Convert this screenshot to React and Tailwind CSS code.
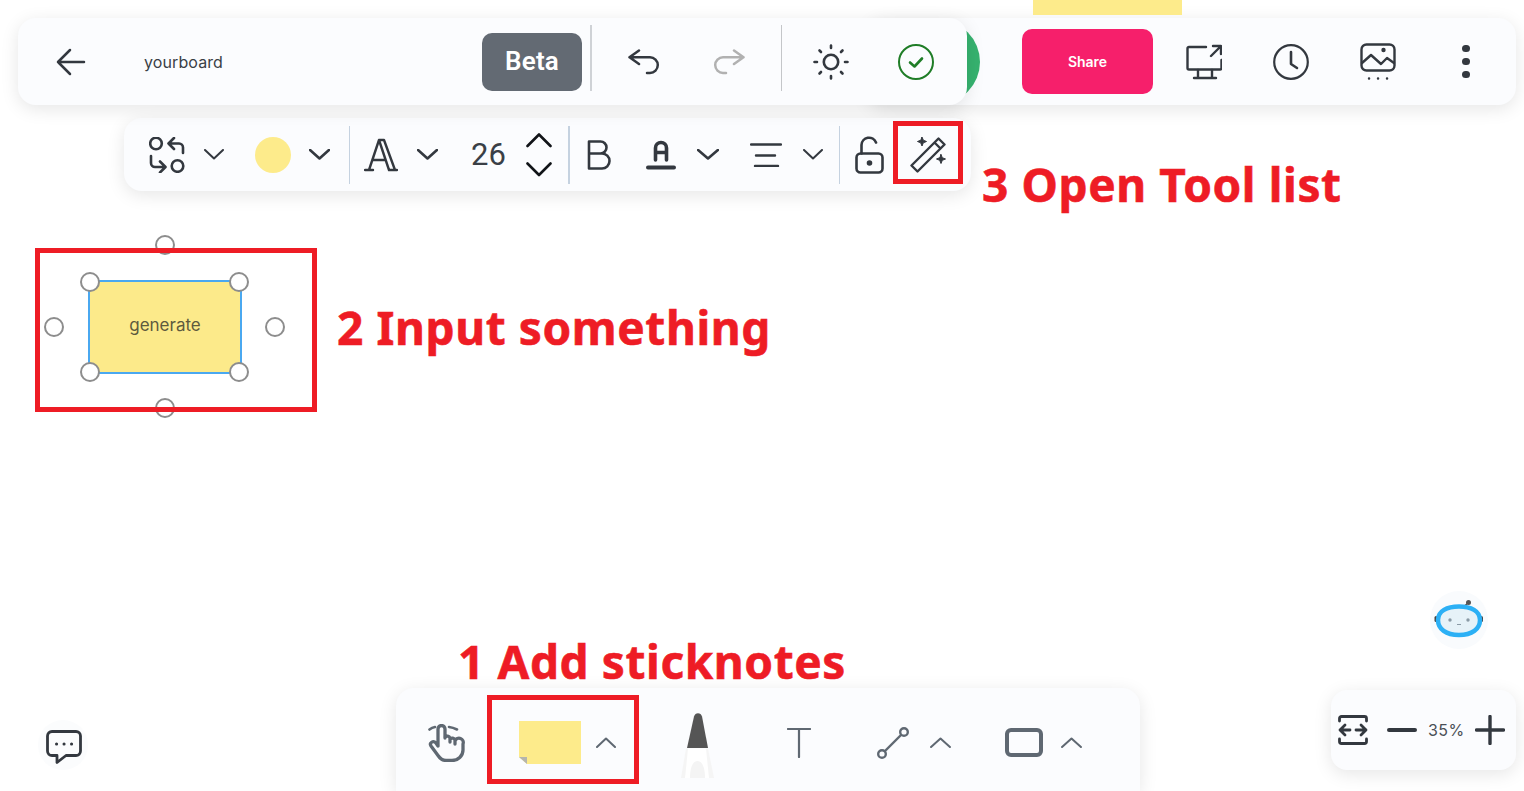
import React from 'react';

const panel = 'bg-[#fbfcfe] shadow-[0_4px_18px_rgba(0,0,0,0.1)]';
const line = { fill: 'none', stroke: 'currentColor', strokeLinecap: 'round', strokeLinejoin: 'round' };

function Chevron({ up, className, width = 20, weight = 2 }) {
  return <svg viewBox="0 0 20 11" className={className} style={{ width }} {...line} strokeWidth={weight} preserveAspectRatio="none">
    <path d={up ? 'M1 10L10 1.5L19 10' : 'M1 1L10 9.5L19 1'} vectorEffect="non-scaling-stroke" />
  </svg>;
}

function Divider({ className }) {
  return <div className={className} />;
}

function Handle({ className }) {
  return <div className={`absolute w-[20px] h-[20px] rounded-full bg-white border-2 border-[#8d8d8d] ${className}`} />;
}

function Note({ className, children }) {
  return <div className={`absolute text-[#ee1c25] font-bold whitespace-nowrap text-[46px] leading-none tracking-[0.6px] [-webkit-text-stroke:0.6px_#ee1c25] font-['Noto_Sans',sans-serif] ${className}`}>{children}</div>;
}

function TopBar() {
  return <div className="flex pt-[18px] pl-[18px] pr-[8px] text-[#33383f]">
    <div className={`relative z-10 flex items-center w-[949px] h-[87px] rounded-[18px] ${panel}`}>
      <svg viewBox="0 0 30 28" className="ml-[38px] w-[30px] h-[28px]" {...line} strokeWidth="2.5">
        <path d="M14 2L2 14L14 26M2 14H28" />
      </svg>
      <span className="ml-[58px] w-[338px] text-[16px] tracking-[0.1px] text-[#3a3f46]">yourboard</span>
      <div className="flex items-center justify-center w-[100px] h-[58px] rounded-[10px] bg-[#636a73] text-white text-[26px] font-semibold tracking-[0.2px] font-['Roboto',sans-serif]">Beta</div>
      <Divider className="ml-[8px] mb-[7px] w-[2px] h-[66px] bg-[#cfd2d6]" />
      <svg viewBox="0 0 32 26" className="ml-[36px] w-[32px] h-[26px]" {...line} strokeWidth="2.5">
        <path d="M11 1.500L1.500 8.300L11 15M1.500 8.300H22a7.800 7.800 0 0 1 0 15.600H19" />
      </svg>
      <svg viewBox="0 0 32 26" className="ml-[53px] w-[32px] h-[26px] text-[#b1b1b1]" {...line} strokeWidth="2.5">
        <path d="M21 1.500L30.500 8.300L21 15M30.500 8.300H10a7.800 7.800 0 0 0 0 15.600H13" />
      </svg>
      <Divider className="ml-[36px] mb-[7px] w-[1px] h-[66px] bg-[#c4c6c9]" />
      <svg viewBox="0 0 38 38" className="ml-[30px] w-[38px] h-[38px]" {...line} strokeWidth="2.6">
        <circle cx="19" cy="19" r="7.200" />
        <path d="M19 2.500V5M19 33V35.500M2.500 19H5M33 19H35.500M7.500 7.500L9 9M29 29L30.500 30.500M30.500 7.500L29 9M9 29L7.500 30.500" />
      </svg>
      <svg viewBox="0 0 38 38" className="ml-[47px] w-[38px] h-[38px] text-[#1f7d27]" {...line} strokeWidth="2">
        <circle cx="19" cy="19" r="17" />
        <path d="M13 19.500L17.500 23.500L25 15.500" strokeWidth="2.600" />
      </svg>
    </div>
    <div className={`flex flex-1 items-center -ml-[100px] h-[87px] rounded-[18px] ${panel}`}>
      <div className="ml-[29px] w-[84px] h-[84px] rounded-full bg-[#36b26f]" />
      <div className="flex items-center justify-center ml-[42px] w-[131px] h-[65px] rounded-[10px] bg-[#f61f6b] text-white text-[14px] font-semibold font-['Inter',sans-serif]">Share</div>
      <svg viewBox="0 0 36 36" className="ml-[33px] w-[36px] h-[36px]" {...line} strokeWidth="2.4">
        <path d="M20 3H3a1.500 1.500 0 0 0-1.500 1.500V24a1.500 1.500 0 0 0 1.500 1.500H34a1.500 1.500 0 0 0 1.500-1.500V16" />
        <path d="M12 26V33M26 26V33M8 34H30M25 12L35 2M27 2H35V10" />
      </svg>
      <svg viewBox="0 0 36 36" className="ml-[51px] w-[36px] h-[36px]" {...line} strokeWidth="2.2">
        <circle cx="18" cy="18" r="16.800" />
        <path d="M18 8V20L24 24" strokeWidth="2.600" />
      </svg>
      <svg viewBox="0 0 36 38" className="ml-[51px] w-[36px] h-[38px]" {...line} strokeWidth="2.4">
        <rect x="1.500" y="1.500" width="33" height="26" rx="5" />
        <path d="M2 20L11 12L21 21L27 15L34 20" />
        <circle cx="23.500" cy="7" r="1" fill="currentColor" />
        <path d="M9 35.500H9.100M18 35.500H18.100M27 35.500H27.100" />
      </svg>
      <div className="flex flex-col gap-[6px] ml-[66px] w-[8px]">
        <div className="w-[8px] h-[7px] rounded-full bg-[#33383f]" />
        <div className="w-[8px] h-[7px] rounded-full bg-[#33383f]" />
        <div className="w-[8px] h-[7px] rounded-full bg-[#33383f]" />
      </div>
    </div>
  </div>;
}

function FormatBar() {
  return <div className={`flex items-center mt-[13px] ml-[124px] w-[847px] h-[73px] rounded-[18px] text-[#33383f] ${panel}`}>
    <svg viewBox="0 0 36 36" className="ml-[25px] w-[36px] h-[36px]" {...line} strokeWidth="2.6">
      <circle cx="7" cy="6.500" r="5.800" />
      <circle cx="28.500" cy="29" r="5.800" />
      <path d="M25 1L19.500 6.500L25 12M19.500 6.500H30a4 4 0 0 1 4 4V16" />
      <path d="M2 19V26a4 4 0 0 0 4 4H16M11 24.500L16.500 30L11 35.500" />
    </svg>
    <Chevron className="ml-[19px] h-[11px]" width={20} />
    <div className="ml-[31px] w-[36px] h-[36px] rounded-full bg-[#fdeb8b]" />
    <Chevron className="ml-[18px] h-[11px]" width={21} weight={2.6} />
    <Divider className="ml-[19px] w-[1px] h-[58px] bg-[#c5d2e0]" />
    <svg viewBox="0 0 34 34" className="ml-[14px] w-[34px] h-[34px]" {...line} strokeWidth="2.4">
      <path d="M1 32H9M5 32L15 2H20L31 32M26 32H33M8.500 22H21M15 2L25 32" />
    </svg>
    <Chevron className="ml-[19px] h-[11px]" width={21} weight={2.6} />
    <span className="ml-[33px] w-[35px] text-[31px] leading-none font-['Roboto',sans-serif] text-[#3a3f46]">26</span>
    <svg viewBox="0 0 26 44" className="ml-[20px] w-[26px] h-[44px] text-[#111418]" {...line} strokeWidth="2.6">
      <path d="M1.500 13L13 1.500L24.500 13M1.500 30.500L13 42L24.500 30.500" />
    </svg>
    <Divider className="ml-[16px] w-[2px] h-[58px] bg-[#c5d2e0]" />
    <svg viewBox="0 0 24 30" className="ml-[17px] w-[24px] h-[30px]" {...line} strokeWidth="2.6">
      <path d="M2 1.500V28.500H15a7.500 7.500 0 0 0 0-15H2M2 1.500H13.500a6 6 0 0 1 0 12" />
    </svg>
    <svg viewBox="0 0 30 30" className="ml-[35px] w-[30px] h-[30px]" {...line} strokeWidth="3.600">
      <path d="M9.500 20V8a5.500 5.500 0 0 1 11 0V20M9.500 12.500H20.500" />
      <path d="M2 27.500H28" strokeWidth="4" />
    </svg>
    <Chevron className="ml-[21px] h-[11px]" width={22} weight={2.6} />
    <svg viewBox="0 0 32 24" className="ml-[31px] w-[32px] h-[24px]" {...line} strokeWidth="2.400">
      <path d="M1 1.500H31M6 12.500H25M5 23H28" />
    </svg>
    <Chevron className="ml-[21px] h-[11px]" width={20} />
    <Divider className="ml-[16px] w-[1px] h-[58px] bg-[#c5d2e0]" />
    <svg viewBox="0 0 29 38" className="ml-[15px] w-[29px] h-[38px]" {...line} strokeWidth="2.600">
      <rect x="1.500" y="17.500" width="26" height="19" rx="4" />
      <path d="M6.500 17.500V9a7.500 7.500 0 0 1 14.500-2.500" />
      <circle cx="14.500" cy="27" r="1.500" fill="currentColor" />
    </svg>
    <svg viewBox="0 0 36 36" className="ml-[26px] w-[36px] h-[36px]" {...line} strokeWidth="2.400">
      <path d="M1.500 28.500L28.500 1.500L34.500 7.500L7.500 34.500ZM24.500 5.500L30.500 11.500" />
      <path d="M12 0L13.300 3.200L16.500 4.500L13.300 5.800L12 9L10.700 5.800L7.500 4.500L10.700 3.200Z" fill="currentColor" strokeWidth="1" />
      <path d="M31 17.500L32.300 20.700L35.500 22L32.300 23.300L31 26.500L29.700 23.300L26.500 22L29.700 20.700Z" fill="currentColor" strokeWidth="1" />
    </svg>
  </div>;
}

function ChatButton() {
  return <div className="flex items-center justify-center ml-[38px] mb-[21px] w-[50px] h-[50px] rounded-full bg-[#fbfcfd] text-[#33383f]">
    <svg viewBox="0 0 36 34" className="ml-[1px] mt-[3px] w-[36px] h-[34px]" {...line} strokeWidth="2.800">
      <path d="M6 1.500H30a4.500 4.500 0 0 1 4.500 4.500V21a4.500 4.500 0 0 1-4.500 4.500H20L11 32.500V25.500H6A4.500 4.500 0 0 1 1.500 21V6A4.500 4.500 0 0 1 6 1.500Z" />
      <path d="M10.500 14H10.600M18 14H18.100M25.500 14H25.600" strokeWidth="3" />
    </svg>
  </div>;
}

function ToolBar() {
  return <div className={`flex items-center ml-[308px] pt-[6px] w-[744px] h-[103px] rounded-t-[18px] text-[#5f6872] ${panel}`}>
    <svg viewBox="0 0 38 38" className="ml-[32px] w-[38px] h-[38px]" {...line} strokeWidth="3.300">
      <path d="M10 22V5a3.500 3.500 0 0 1 7 0V14M17 13a3 3 0 0 1 5 1V18M22 15a3 3 0 0 1 5 1V20M27 17a4 4 0 0 1 8 3V26c0 6-5 10.500-11 10.500H18c-4 0-6-2-8-5L3 22c-2-3 2-6 5-3L10 22" />
      <path d="M1.500 5.500Q4 3.500 7 3M21 3Q25 3.500 29 5.500" strokeWidth="2.600" />
    </svg>
    <svg viewBox="0 0 62 43" className="ml-[53px] w-[62px] h-[43px]">
      <polygon points="0,0 62,0 62,43 8,43 0,36" fill="#fdeb8b" />
      <polygon points="0,36 8,36 8,43" fill="#b5b5ad" />
    </svg>
    <Chevron up className="ml-[15px] h-[11px]" width={20} />
    <svg viewBox="0 0 36 67" className="mt-[8px] ml-[64px] w-[36px] h-[67px]">
      <path d="M7 35L14 3.500C15 -1 21 -1 22 3.500L28 35Z" fill="#555555" />
      <path d="M6 35.500H28L34 65H1Z" fill="#f5f5f5" />
      <path d="M8 35.500H26L29 65H5Z" fill="#ffffff" />
      <path d="M10 65C10 52 14 48 17.500 48C21 48 25 52 25 65Z" fill="#f4f4f4" />
    </svg>
    <svg viewBox="0 0 24 30" className="ml-[71px] w-[24px] h-[30px]" {...line} strokeWidth="2.200">
      <path d="M1 1H23M12 1V29" />
    </svg>
    <svg viewBox="0 0 32 32" className="ml-[66px] w-[32px] h-[32px]" {...line} strokeWidth="2.400">
      <circle cx="5" cy="27" r="3.800" />
      <circle cx="27" cy="5" r="3.800" />
      <path d="M8 24L24 8" />
    </svg>
    <Chevron up className="ml-[21px] h-[11px]" width={21} />
    <div className="ml-[54px] w-[38px] h-[29px] rounded-[6px] border-4 border-[#5f6872]" />
    <Chevron up className="ml-[18px] h-[11px]" width={21} />
  </div>;
}

function ZoomBar() {
  return <div className={`flex items-center ml-[191px] mb-[21px] w-[185px] h-[80px] rounded-[16px] text-[#33383f] ${panel}`}>
    <svg viewBox="0 0 30 30" className="ml-[7px] w-[30px] h-[30px]" {...line} strokeWidth="2.800">
      <path d="M1.500 6V3.500a2 2 0 0 1 2-2H26.500a2 2 0 0 1 2 2V6M1.500 24V26.500a2 2 0 0 0 2 2H26.500a2 2 0 0 0 2-2V24" />
      <path d="M2 15H12M7 10L2 15L7 20M18 15H28M23 10L28 15L23 20" />
    </svg>
    <div className="ml-[19px] w-[30px] h-[4px] rounded-full bg-[#33383f]" />
    <span className="ml-[11px] w-[36px] text-[16px] leading-none text-[#4a4f56] tracking-[0.4px]">35%</span>
    <svg viewBox="0 0 30 30" className="ml-[11px] w-[30px] h-[30px]" {...line} strokeWidth="3.400">
      <path d="M1.500 15H28.500M15 1.500V28.500" />
    </svg>
  </div>;
}

function Robot() {
  return <div className="absolute left-[1430px] top-[591px] flex items-center justify-center w-[58px] h-[58px] rounded-full bg-[#f9fbfd]">
    <svg viewBox="0 0 50 40" className="w-[50px] h-[40px]">
      <path d="M28 8L34 3" fill="none" stroke="#555" strokeWidth="1.500" />
      <circle cx="34.500" cy="2.500" r="2.500" fill="#555" />
      <rect x="0.500" y="16" width="3" height="6" rx="1.500" fill="#444" />
      <rect x="46" y="16" width="3" height="6" rx="1.500" fill="#444" />
      <path d="M4 20C4 11 13 6.500 25 6.500C37 6.500 46 11 46 20C46 29 38 35 25 35C12 35 4 29 4 20Z" fill="#e6f2f8" stroke="#2cb0f5" strokeWidth="4.500" />
      <circle cx="16" cy="20" r="1.700" fill="#8a9aa5" />
      <circle cx="34" cy="20" r="1.700" fill="#8a9aa5" />
      <path d="M23 24.500H27" stroke="#8a9aa5" strokeWidth="1" />
    </svg>
  </div>;
}

export default function App() {
  return <div className="relative flex flex-col w-full h-[791px] overflow-hidden bg-white font-['Inter',sans-serif]">
    <div className="absolute top-0 left-[1033px] w-[149px] h-[15px] bg-[#fdeb8b]" />
    <TopBar />
    <FormatBar />

    <div className="absolute left-[88px] top-[280px] flex items-center justify-center w-[154px] h-[94px] pb-[3px] bg-[#fcea8a] border-2 border-[#4aa8f0] text-[17px] text-[#5e5a3e]">generate</div>
    <Handle className="left-[155px] top-[235px]" />
    <Handle className="left-[80px] top-[272px]" />
    <Handle className="left-[229px] top-[272px]" />
    <Handle className="left-[44px] top-[317px]" />
    <Handle className="left-[265px] top-[317px]" />
    <Handle className="left-[80px] top-[362px]" />
    <Handle className="left-[229px] top-[362px]" />
    <Handle className="left-[155px] top-[398px]" />

    <div className="absolute left-[35px] top-[248px] w-[282px] h-[164px] border-[5px] border-[#ee1c25]" />
    <div className="absolute left-[893px] top-[121px] w-[70px] h-[63px] border-[5px] border-[#ee1c25]" />
    <Note className="left-[982px] top-[161px]">3 Open Tool list</Note>
    <Note className="left-[337px] top-[304px]">2 Input something</Note>
    <Note className="left-[458px] top-[638px]">1 Add sticknotes</Note>

    <Robot />

    <div className="flex items-end mt-auto">
      <ChatButton />
      <ToolBar />
      <ZoomBar />
    </div>
    <div className="absolute left-[487px] top-[695px] w-[152px] h-[89px] border-[5px] border-[#ee1c25]" />
  </div>;
}
